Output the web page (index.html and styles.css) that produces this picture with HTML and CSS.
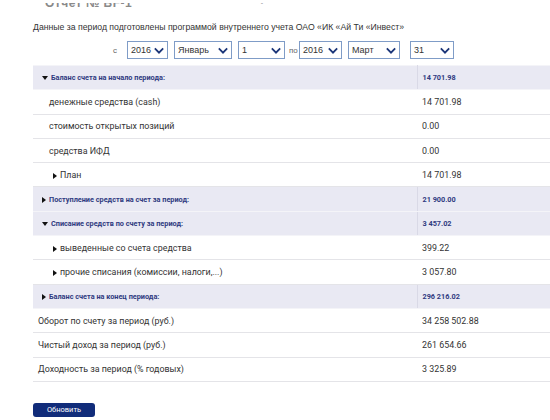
FILE: index.html
```html
<!DOCTYPE html>
<html lang="ru">
<head>
<meta charset="utf-8">
<link rel="stylesheet" href="styles.css">
</head>
<body>
<div class="page">
  <div class="doc-title"><h1>Отчет № BF-1<span class="tail">·</span></h1></div>
  <p class="intro">Данные за период подготовлены программой внутреннего учета ОАО «ИК «Ай Ти «Инвест»</p>

  <div class="period">
    <span class="lbl lbl-from">с</span>
    <div class="sel w-year"><span>2016</span><svg class="chev" viewBox="0 0 12 8"><path d="M1 1.5 L6 6.5 L11 1.5" /></svg></div>
    <div class="sel w-month"><span>Январь</span><svg class="chev" viewBox="0 0 12 8"><path d="M1 1.5 L6 6.5 L11 1.5" /></svg></div>
    <div class="sel w-day1"><span>1</span><svg class="chev" viewBox="0 0 12 8"><path d="M1 1.5 L6 6.5 L11 1.5" /></svg></div>
    <span class="lbl lbl-to">по</span>
    <div class="sel w-year2"><span>2016</span><svg class="chev" viewBox="0 0 12 8"><path d="M1 1.5 L6 6.5 L11 1.5" /></svg></div>
    <div class="sel w-month2"><span>Март</span><svg class="chev" viewBox="0 0 12 8"><path d="M1 1.5 L6 6.5 L11 1.5" /></svg></div>
    <div class="sel w-day2"><span>31</span><svg class="chev" viewBox="0 0 12 8"><path d="M1 1.5 L6 6.5 L11 1.5" /></svg></div>
  </div>

  <table class="report">
    <colgroup><col class="c-name"><col class="c-val"></colgroup>
    <tr class="sect">
      <td class="name"><span class="tri down"></span>Баланс счета на начало периода:</td>
      <td class="val">14 701.98</td>
    </tr>
    <tr>
      <td class="name sub">денежные средства (cash)</td>
      <td class="val">14 701.98</td>
    </tr>
    <tr>
      <td class="name sub">стоимость открытых позиций</td>
      <td class="val">0.00</td>
    </tr>
    <tr>
      <td class="name sub">средства ИФД</td>
      <td class="val">0.00</td>
    </tr>
    <tr>
      <td class="name sub2"><span class="tri right"></span>План</td>
      <td class="val">14 701.98</td>
    </tr>
    <tr class="sect">
      <td class="name"><span class="tri right"></span>Поступление средств на счет за период:</td>
      <td class="val">21 900.00</td>
    </tr>
    <tr class="sect">
      <td class="name"><span class="tri down"></span>Списание средств по счету за период:</td>
      <td class="val">3 457.02</td>
    </tr>
    <tr>
      <td class="name sub2"><span class="tri right"></span>выведенные со счета средства</td>
      <td class="val">399.22</td>
    </tr>
    <tr>
      <td class="name sub2"><span class="tri right"></span>прочие списания (комиссии, налоги,...)</td>
      <td class="val">3 057.80</td>
    </tr>
    <tr class="sect">
      <td class="name"><span class="tri right"></span>Баланс счета на конец периода:</td>
      <td class="val">296 216.02</td>
    </tr>
    <tr>
      <td class="name top">Оборот по счету за период (руб.)</td>
      <td class="val">34 258 502.88</td>
    </tr>
    <tr>
      <td class="name top">Чистый доход за период (руб.)</td>
      <td class="val">261 654.66</td>
    </tr>
    <tr>
      <td class="name top">Доходность за период (% годовых)</td>
      <td class="val">3 325.89</td>
    </tr>
  </table>

  <button class="refresh" type="button">Обновить</button>
</div>
</body>
</html>
```

FILE: styles.css
```css
html, body {
  margin: 0;
  padding: 0;
  background: #ffffff;
  overflow: hidden;
}

.page {
  padding-left: 33px;
  width: 517px;
  font-family: "Liberation Sans", Arial, sans-serif;
  color: #333333;
}

.doc-title {
  margin-top: 3px;
  height: 5px;
  overflow: hidden;
  padding-left: 12px;
}

.doc-title h1 {
  margin: -7px 0 0 0;
  font-size: 12px;
  line-height: 14px;
  font-weight: bold;
  color: #8a8a8a;
  letter-spacing: 0.5px;
  white-space: nowrap;
}

.doc-title .tail {
  margin-left: 128px;
  color: #bbbbbb;
}

.intro {
  margin: 13px 0 0 0;
  font-size: 8.7px;
  line-height: 12px;
  color: #333;
}

.period {
  display: flex;
  align-items: center;
  margin-top: 8px;
  margin-left: 80px;
  height: 18px;
}

.lbl {
  font-size: 8px;
  color: #666;
}

.lbl-from {
  width: 14px;
}

.lbl-to {
  width: 10px;
  margin-left: 4px;
}

.sel {
  box-sizing: border-box;
  height: 18px;
  border: 1px solid #7f9cc7;
  background: #fff;
  font-size: 9px;
  line-height: 16px;
  color: #333;
  padding-left: 3px;
  position: relative;
  margin-right: 6px;
}

.chev {
  position: absolute;
  right: 3px;
  top: 5px;
  width: 10px;
  height: 7px;
}

.chev path {
  fill: none;
  stroke: #1b3578;
  stroke-width: 2.2;
}

.w-year { width: 41px; }
.w-month { width: 58px; }
.w-day1 { width: 47px; margin-right: 0; }
.w-year2 { width: 43px; }
.w-month2 { width: 52px; margin-right: 10px; }
.w-day2 { width: 44px; }

.report {
  margin-top: 6px;
  width: 517px;
  table-layout: fixed;
  border-collapse: collapse;
  font-family: Roboto, "Open Sans", sans-serif;
}

.c-name { width: 384px; }
.c-val { width: 133px; }

.report td {
  height: 23.3px;
  padding: 0;
  border-bottom: 1px solid #e4e4e8;
  font-size: 8.9px;
  color: #333;
  vertical-align: middle;
  white-space: nowrap;
}

.report .val {
  padding-left: 5px;
}

.report .sub {
  padding-left: 16px;
}

.report .sub2 {
  padding-left: 20px;
}

.report .top {
  padding-left: 5px;
}

.report .sect td {
  background: #e9e9f3;
  font-size: 7.3px;
  font-weight: bold;
  color: #2f3a80;
  border-bottom: 1px solid #f4f4f8;
  border-top: 1px solid #f4f4f8;
}

.report .sect .name {
  padding-left: 9px;
  border-right: 1px solid #d9d9e6;
}

.tri {
  display: inline-block;
  width: 0;
  height: 0;
  margin-right: 3px;
  vertical-align: 0px;
}

.tri.down {
  border-left: 3px solid transparent;
  border-right: 3px solid transparent;
  border-top: 4px solid #111;
}

.tri.right {
  border-top: 3px solid transparent;
  border-bottom: 3px solid transparent;
  border-left: 4px solid #111;
  vertical-align: -1px;
}

.refresh {
  display: block;
  margin-top: 21px;
  width: 62px;
  height: 14px;
  padding: 0;
  border: none;
  border-radius: 3px;
  background: #112c7a;
  color: #ffffff;
  font-family: Roboto, "Open Sans", sans-serif;
  font-size: 7.5px;
  line-height: 14px;
  text-align: center;
}
```
